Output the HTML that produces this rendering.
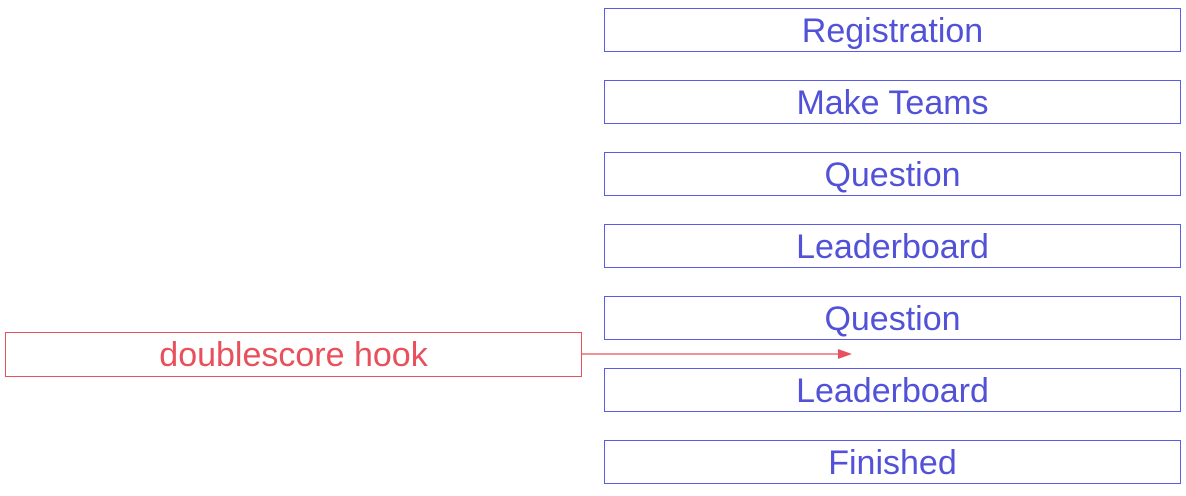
<html><head><style>
body{margin:0;width:1186px;height:496px;background:#fff;position:relative;font-family:"Liberation Sans",sans-serif;overflow:hidden}
.b{position:absolute;left:604px;width:575px;height:42px;border:1.3px solid #5b5ce6;color:#5252d8;font-size:34px;line-height:44px;text-align:center}
.r{position:absolute;left:5px;top:332px;width:575px;height:43px;border:1.3px solid #e8505b;color:#e8505b;font-size:34px;line-height:45px;text-align:center}
</style></head><body>
<div class="b" style="top:8px">Registration</div>
<div class="b" style="top:80px">Make Teams</div>
<div class="b" style="top:152px">Question</div>
<div class="b" style="top:224px">Leaderboard</div>
<div class="b" style="top:296px">Question</div>
<div class="b" style="top:368px">Leaderboard</div>
<div class="b" style="top:440px">Finished</div>
<div class="r">doublescore hook</div>
<svg style="position:absolute;left:0;top:0" width="1186" height="496">
<line x1="581" y1="354" x2="840" y2="354" stroke="#e8505b" stroke-width="1.3"/>
<polygon points="838,349 852,354 838,359" fill="#e8505b"/>
</svg>
</body></html>
